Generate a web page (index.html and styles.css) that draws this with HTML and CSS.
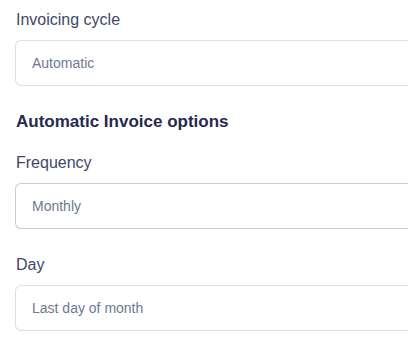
FILE: index.html
```html
<!DOCTYPE html>
<html>

<head>
  <meta name="viewport" content="width=device-width, initial-scale=1">
  <link rel="stylesheet" href="styles.css">
</head>

<body>

  <form class="settings">
    <div class="field">
      <label for="cycle">Invoicing cycle</label>
      <div class="select" id="cycle">Automatic</div>
    </div>

    <h2>Automatic Invoice options</h2>

    <div class="field">
      <label for="frequency">Frequency</label>
      <div class="select grey" id="frequency">Monthly</div>
    </div>

    <div class="field">
      <label for="day">Day</label>
      <div class="select" id="day">Last day of month</div>
    </div>
  </form>

</body>

</html>
```

FILE: styles.css
```css
* {
  box-sizing: border-box;
}

body {
  margin: 0;
  font-family: "Liberation Sans", Arial, Helvetica, sans-serif;
  background-color: white;
}

/* Form column, cut off at the right edge */
.settings {
  padding: 8px 0 0 15px;
  display: flex;
  flex-direction: column;
}

.field {
  display: flex;
  flex-direction: column;
  gap: 8px;
}

.field + .field {
  margin-top: 24px;
}

label {
  font-size: 16px;
  line-height: 24px;
  color: #3f4765;
  padding-left: 1px;
}

h2 {
  margin: 24px 0 17px 1px;
  font-size: 17px;
  line-height: 24px;
  font-weight: bold;
  color: #262a4e;
}

/* Select boxes, right side runs out of view */
.select {
  height: 46px;
  border: 1px solid #d2e3f0;
  border-right: none;
  border-radius: 6px 0 0 6px;
  padding: 0 16px;
  display: flex;
  align-items: center;
  font-size: 14px;
  color: #6d7990;
}

.select.grey {
  border-color: #c9ccd1;
}
```
